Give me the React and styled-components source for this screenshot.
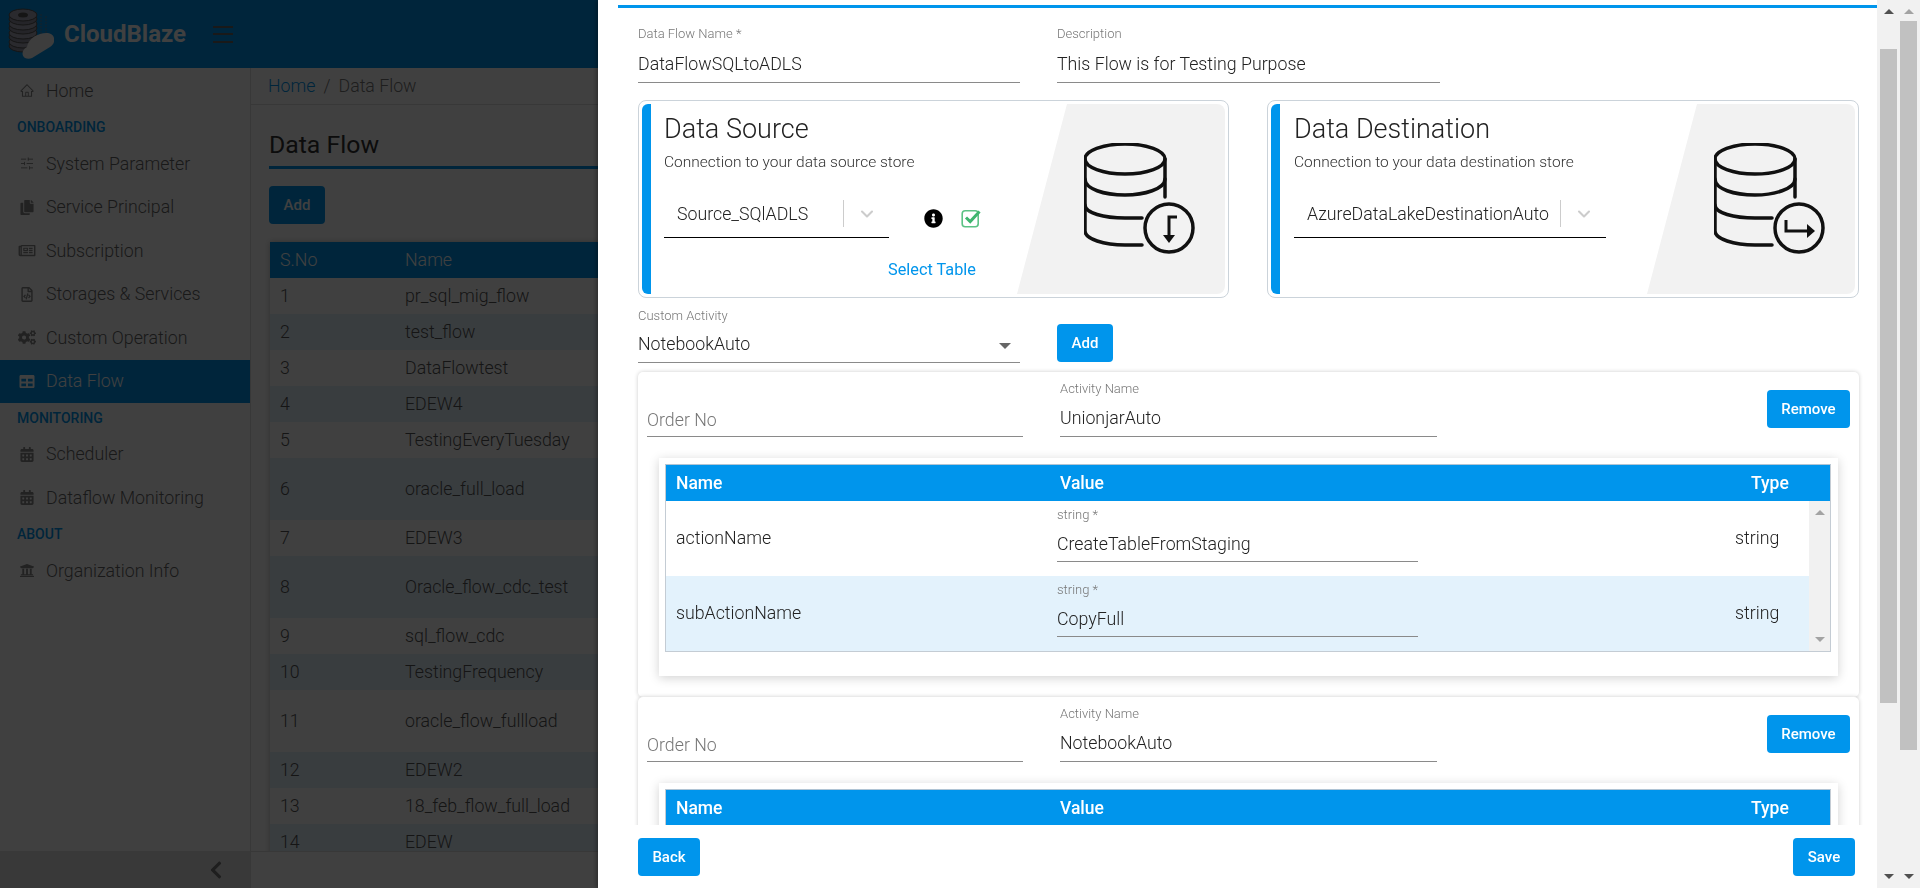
import React from 'react';
import styled, { createGlobalStyle } from 'styled-components';
import {
  FaCopy,
  FaRegNewspaper,
  FaRegFileCode,
  FaCogs,
  FaTable,
  FaCalendarAlt,
  FaUniversity,
  FaInfoCircle,
  FaChevronLeft,
} from 'react-icons/fa';
import { AiOutlineHome } from 'react-icons/ai';
import { ChevronDown, SlidersHorizontal } from 'lucide-react';

const PRIMARY = '#0095ec';

const GlobalStyle = createGlobalStyle`
  html, body {
    margin: 0;
    padding: 0;
    height: 100%;
    overflow: hidden;
    font-family: Roboto, "Liberation Sans", sans-serif;
    font-size: 17.75px;
    font-weight: 300;
    color: #333;
    background: #fff;
  }
  * {
    box-sizing: border-box;
  }
`;

/* page behind the drawer */
const Page = styled.div`
  display: flex;
  flex-direction: column;
  height: 100vh;
  overflow: hidden;
`;

const TopBar = styled.header`
  display: flex;
  align-items: center;
  flex: 0 0 68px;
  padding-left: 8px;
  background: ${PRIMARY};
`;

const Brand = styled.span`
  margin-left: 10px;
  width: 149px;
  color: #fff;
  font-size: 24px;
  font-weight: 700;
`;

const Burger = styled.div`
  display: flex;
  flex-direction: column;
  gap: 5.5px;
  width: 20px;

  span {
    height: 2px;
    background: #666;
  }
`;

const Below = styled.div`
  display: flex;
  flex: 1;
  min-height: 0;
`;

const Sidebar = styled.aside`
  display: flex;
  flex-direction: column;
  flex: 0 0 250px;
`;

const Nav = styled.nav`
  flex: 1;
  padding-top: 1px;
`;

const NavItem = styled.div`
  display: flex;
  align-items: center;
  height: 43.5px;
  padding-left: 18px;
  background: ${(p) => (p.$active ? PRIMARY : 'transparent')};
  color: ${(p) => (p.$active ? '#fff' : '#666')};

  svg {
    flex: 0 0 18px;
    margin-right: 10px;
    font-size: 15px;
    color: ${(p) => (p.$active ? '#fff' : '#888')};
  }
`;

const NavHeading = styled.div`
  display: flex;
  align-items: center;
  height: 29.5px;
  padding-left: 17px;
  color: ${PRIMARY};
  font-size: 14px;
  font-weight: 500;
`;

const SidebarFooter = styled.div`
  display: flex;
  align-items: center;
  justify-content: flex-end;
  flex: 0 0 37px;
  padding-right: 24px;
  background: #e4e4e4;
  color: #777;
  font-size: 20px;
`;

const Main = styled.main`
  display: flex;
  flex-direction: column;
  flex: 1;
  min-width: 0;
  border-left: 1px solid #ddd;
`;

const Breadcrumb = styled.div`
  display: flex;
  align-items: center;
  gap: 8px;
  flex: 0 0 37px;
  padding-left: 17px;
  border-bottom: 1px solid #ddd;
  color: #777;

  a {
    color: ${PRIMARY};
  }
`;

const MainContent = styled.div`
  flex: 1;
  min-height: 0;
  overflow: hidden;
  padding: 25px 0 0 18px;
`;

const PageTitle = styled.h1`
  margin: 0;
  padding-bottom: 6px;
  border-bottom: 3px solid ${PRIMARY};
  color: #333;
  font-size: 24.8px;
  font-weight: 400;
  line-height: 30px;
`;

const Button = styled.button`
  height: 38px;
  padding: 0;
  border: none;
  border-radius: 4px;
  background: ${PRIMARY};
  color: #fff;
  font-family: inherit;
  font-size: 15px;
  font-weight: 500;
`;

const PageAdd = styled(Button)`
  display: block;
  margin-top: 17px;
  width: 56px;
`;

const FlowTable = styled.div`
  margin: 18px 0 0 1px;
  box-shadow: 0 0 6px rgba(0, 0, 0, 0.25);
`;

const FlowRow = styled.div`
  display: flex;
  align-items: center;
  height: ${(p) => (p.$tall ? 62 : 36)}px;
  padding-left: 10px;
  background: ${(p) => (p.$head ? PRIMARY : p.$alt ? '#e3f2fc' : '#fff')};
  color: ${(p) => (p.$head ? '#fff' : '#555')};
`;

const FlowNo = styled.span`
  flex: 0 0 125px;
`;

const MainFooter = styled.div`
  flex: 0 0 37px;
  border-top: 1px solid #ddd;
  background: #fff;
`;

const Backdrop = styled.div`
  position: fixed;
  inset: 0;
  background: rgba(0, 0, 0, 0.75);
`;

/* right hand drawer */
const Drawer = styled.section`
  position: fixed;
  top: 0;
  right: 0;
  bottom: 0;
  left: 598px;
  display: flex;
  background: #fff;
  box-shadow: -2px 0 4px rgba(0, 0, 0, 0.3);
`;

const DrawerColumn = styled.div`
  display: flex;
  flex-direction: column;
  flex: 1;
  min-width: 0;
  margin-left: 20px;
  padding-top: 5px;
`;

const DrawerBody = styled.div`
  flex: 1;
  min-height: 0;
  overflow: hidden;
  padding: 18px 18px 0 20px;
  border-top: 3px solid ${PRIMARY};
`;

const DrawerFooter = styled.div`
  display: flex;
  justify-content: space-between;
  flex: 0 0 63px;
  padding: 13px 22px 0 20px;
`;

const FooterButton = styled(Button)`
  width: 62px;
`;

const FieldGrid = styled.div`
  display: grid;
  grid-template-columns: 382px 383px;
  column-gap: 37px;
  align-items: end;
`;

const Field = styled.div`
  display: flex;
  flex-direction: column;
  width: ${(p) => (p.$width ? `${p.$width}px` : 'auto')};
`;

const FieldLabel = styled.label`
  height: 16px;
  color: #777;
  font-size: 13px;
  line-height: 16px;
`;

const FieldValue = styled.div`
  display: flex;
  align-items: flex-end;
  justify-content: space-between;
  height: ${(p) => p.$height || 40}px;
  padding-bottom: ${(p) => p.$pb || 8}px;
  border-bottom: 1px solid #8a8a8a;
  color: ${(p) => (p.$placeholder ? '#777' : '#222')};
  line-height: 20px;
`;

const CardRow = styled.div`
  display: grid;
  grid-template-columns: 591px 592px;
  column-gap: 38px;
  margin-top: 17px;
`;

const Card = styled.div`
  display: flex;
  height: 198px;
  padding: 3px;
  border: 1px solid #cbd3da;
  border-radius: 8px;
`;

const CardStripe = styled.div`
  flex: 0 0 9px;
  border-radius: 6px 0 0 6px;
  background: ${PRIMARY};
`;

const CardBody = styled.div`
  flex: 1;
  min-width: 0;
  padding: 10px 0 0 ${(p) => p.$indent || 13}px;
`;

const CardTitle = styled.h2`
  margin: 0;
  color: #222;
  font-size: 27px;
  font-weight: 300;
  line-height: 30px;
`;

const CardText = styled.p`
  margin: 8px 0 0;
  color: #333;
  font-size: 15.5px;
  line-height: 20px;
`;

const PickRow = styled.div`
  display: flex;
  margin-top: 18px;
`;

const Picker = styled.div`
  display: flex;
  align-items: center;
  width: ${(p) => p.$width}px;
  height: 48px;
  border-bottom: 1px solid #000;
`;

const PickerText = styled.span`
  flex: 1;
  padding-left: 13px;
  color: #222;
  white-space: nowrap;
`;

const PickerSeparator = styled.span`
  width: 1px;
  height: 27px;
  background: #ccc;
`;

const PickerChevron = styled.span`
  display: flex;
  justify-content: center;
  flex: 0 0 45px;
  color: #ccc;
`;

const PickTools = styled.div`
  display: flex;
  align-items: center;
  gap: 18px;
  margin-left: 35px;
  padding-top: 8px;
  height: 48px;
`;

const InfoIcon = styled(FaInfoCircle)`
  color: #000;
  font-size: 19px;
`;

const SelectTable = styled.a`
  display: block;
  margin: 22px 0 0 224px;
  color: ${PRIMARY};
  font-weight: 400;
  font-size: 16.3px;
  line-height: 20px;
`;

const CardArt = styled.div`
  flex: 0 0 208px;
  height: 190px;
  padding: 39px 0 0 67px;
  border-radius: 0 8px 8px 0;
  background: #f2f2f2;
  clip-path: polygon(50px 0, 100% 0, 100% 100%, 0 100%);
`;

const CustomRow = styled(FieldGrid)`
  margin-top: 10px;
`;

const AddButton = styled(Button)`
  width: 56px;
  margin-bottom: 1px;
`;

const ActivityStack = styled.div`
  margin-top: 9px;
`;

const ActivityCard = styled.article`
  height: 325px;
  padding: 9px 9px 0;
  border-radius: 5px;
  box-shadow: 0 0 4px rgba(0, 0, 0, 0.2);
  background: #fff;
`;

const ActivityHead = styled.div`
  display: flex;
  align-items: flex-end;
  gap: 37px;
`;

const RemoveButton = styled(Button)`
  width: 83px;
  margin: 0 0 9px auto;
`;

const InnerCard = styled.div`
  margin: 21px 12px 0 12px;
  height: 218px;
  padding: 6px 7px 0 6px;
  background: #fff;
  box-shadow: 0 2px 10px rgba(0, 0, 0, 0.18);
`;

const ParamTable = styled.div`
  border: 1px solid #c4ccd4;
  border-top-color: #b0c4d4;
`;

const ParamHead = styled.div`
  display: grid;
  grid-template-columns: 384px 691px 1fr;
  align-items: center;
  height: 36px;
  padding-left: 10px;
  background: ${PRIMARY};
  color: #fff;
  font-size: 17.5px;
  font-weight: 500;
`;

const ParamBody = styled.div`
  display: flex;
`;

const ParamRows = styled.div`
  flex: 1;
  min-width: 0;
`;

const ParamRow = styled.div`
  display: grid;
  grid-template-columns: 381px 361px 1fr;
  align-items: center;
  height: 75px;
  padding: 0 0 2px 10px;
  background: ${(p) => (p.$alt ? '#e3f2fc' : '#fff')};
  color: #222;
`;

const ParamField = styled(Field)`
  align-self: start;
  padding-top: 6px;
`;

const ParamType = styled.span`
  padding-left: 317px;
`;

const MiniScroll = styled.div`
  display: flex;
  flex-direction: column;
  justify-content: space-between;
  flex: 0 0 21px;
  padding: 9px 0;
  background: #f1f1f1;
`;

const Arrow = styled.span`
  align-self: center;
  width: 0;
  height: 0;
  border-left: ${(p) => p.$size || 5}px solid transparent;
  border-right: ${(p) => p.$size || 5}px solid transparent;
  border-${(p) => (p.$up ? 'bottom' : 'top')}: ${(p) => p.$size || 5}px solid ${(p) => p.$color || '#a3a3a3'};
`;

const Caret = styled(Arrow)`
  margin: 0 9px 5px 0;
  align-self: flex-end;
`;

/* the two browser scrollbars stacked at the right edge */
const Scrollbars = styled.div`
  display: flex;
  flex: 0 0 43px;
  padding-left: 3px;
  background: #f1f1f1;
`;

const Scrollbar = styled.div`
  position: relative;
  display: flex;
  flex-direction: column;
  justify-content: space-between;
  width: 17px;
  margin-right: 3px;
  padding: 9px 0;
`;

const Thumb = styled.div`
  position: absolute;
  left: 0;
  right: 0;
  top: ${(p) => p.$top}px;
  height: ${(p) => p.$height}px;
  background: #c1c1c1;
`;

const FLOWS = [
  ['pr_sql_mig_flow'],
  ['test_flow'],
  ['DataFlowtest'],
  ['EDEW4'],
  ['TestingEveryTuesday'],
  ['oracle_full_load', true],
  ['EDEW3'],
  ['Oracle_flow_cdc_test', true],
  ['sql_flow_cdc'],
  ['TestingFrequency'],
  ['oracle_flow_fullload', true],
  ['EDEW2'],
  ['18_feb_flow_full_load'],
  ['EDEW'],
];

const CloudLogo = () => (
  <svg width="46" height="52" viewBox="0 0 46 52">
    <path d="M28 4v24M33 6v22M38 8v20" stroke="#5d7f99" strokeWidth="1" strokeDasharray="2 1" fill="none" />
    {[34, 25, 16, 7].map((y) => (
      <g key={y}>
        <ellipse cx="15" cy={y + 4} rx="14" ry="6" fill="#8e8e9e" stroke="#555" />
        <ellipse cx="15" cy={y} rx="14" ry="6" fill="#a6a6b6" stroke="#555" />
      </g>
    ))}
    <ellipse cx="15" cy="7" rx="5" ry="2.5" fill="#555" />
    <path d="M17 50c-4-2-3-9 2-11 1-6 6-11 13-13 7-2 13-1 14 4 1 4-1 7-4 9L24 50c-2 1-5 1-7 0z" fill="#f2f2f2" />
  </svg>
);

const TickBox = () => (
  <svg width="21" height="21" viewBox="0 0 21 21">
    <rect x="1.2" y="2.8" width="16" height="16" rx="3" fill="none" stroke="#5cc285" strokeWidth="1.6" />
    <path d="M5 9.5L9.2 13.5L18.5 3.5" fill="none" stroke="#3fb56f" strokeWidth="3" />
  </svg>
);

const Cylinder = () => (
  <g fill="none" stroke="#111" strokeWidth="3.5" strokeLinecap="round">
    <ellipse cx="41" cy="16" rx="40" ry="15" />
    <path d="M1 16V88C1 96 20 102 41 102H58" />
    <path d="M81 16V54" />
    <path d="M1 36C1 46 20 52 41 52C60 52 81 46 81 36" />
    <path d="M1 62C1 70 20 75 41 75H58" />
    <circle cx="85" cy="85" r="24" />
  </g>
);

const SourceArt = () => (
  <svg width="112" height="112" viewBox="0 0 112 112">
    <Cylinder />
    <path d="M93 74H85V97" fill="none" stroke="#111" strokeWidth="3" />
    <path d="M79 92L85 100L91 92Z" fill="#111" />
  </svg>
);

const DestinationArt = () => (
  <svg width="112" height="112" viewBox="0 0 112 112">
    <Cylinder />
    <path d="M72 77V88H97" fill="none" stroke="#111" strokeWidth="3" />
    <path d="M93 81L101 88L93 95Z" fill="#111" />
  </svg>
);

const ActivityBlock = ({ name, first }) => (
  <ActivityCard>
    <ActivityHead>
      <Field $width={376}>
        <FieldValue $placeholder $pb={6}>Order No</FieldValue>
      </Field>
      <Field $width={377}>
        <FieldLabel>Activity Name</FieldLabel>
        <FieldValue>{name}</FieldValue>
      </Field>
      <RemoveButton>Remove</RemoveButton>
    </ActivityHead>
    <InnerCard>
      <ParamTable>
        <ParamHead>
          <span>Name</span>
          <span>Value</span>
          <span>Type</span>
        </ParamHead>
        {first && (
          <ParamBody>
            <ParamRows>
              <ParamRow>
                <span>actionName</span>
                <ParamField>
                  <FieldLabel>string *</FieldLabel>
                  <FieldValue $height={39} $pb={7}>CreateTableFromStaging</FieldValue>
                </ParamField>
                <ParamType>string</ParamType>
              </ParamRow>
              <ParamRow $alt>
                <span>subActionName</span>
                <ParamField>
                  <FieldLabel>string *</FieldLabel>
                  <FieldValue $height={39} $pb={7}>CopyFull</FieldValue>
                </ParamField>
                <ParamType>string</ParamType>
              </ParamRow>
            </ParamRows>
            <MiniScroll>
              <Arrow $up />
              <Arrow />
            </MiniScroll>
          </ParamBody>
        )}
      </ParamTable>
    </InnerCard>
  </ActivityCard>
);

const App = () => (
  <>
    <GlobalStyle />
    <Page>
      <TopBar>
        <CloudLogo />
        <Brand>CloudBlaze</Brand>
        <Burger>
          <span />
          <span />
          <span />
        </Burger>
      </TopBar>
      <Below>
        <Sidebar>
          <Nav>
            <NavItem><AiOutlineHome />Home</NavItem>
            <NavHeading>ONBOARDING</NavHeading>
            <NavItem><SlidersHorizontal size={15} strokeWidth={1.5} />System Parameter</NavItem>
            <NavItem><FaCopy />Service Principal</NavItem>
            <NavItem><FaRegNewspaper />Subscription</NavItem>
            <NavItem><FaRegFileCode />Storages &amp; Services</NavItem>
            <NavItem><FaCogs />Custom Operation</NavItem>
            <NavItem $active><FaTable />Data Flow</NavItem>
            <NavHeading>MONITORING</NavHeading>
            <NavItem><FaCalendarAlt />Scheduler</NavItem>
            <NavItem><FaCalendarAlt />Dataflow Monitoring</NavItem>
            <NavHeading>ABOUT</NavHeading>
            <NavItem><FaUniversity />Organization Info</NavItem>
          </Nav>
          <SidebarFooter><FaChevronLeft /></SidebarFooter>
        </Sidebar>
        <Main>
          <Breadcrumb>
            <a>Home</a>
            <span>/</span>
            <span>Data Flow</span>
          </Breadcrumb>
          <MainContent>
            <PageTitle>Data Flow</PageTitle>
            <PageAdd>Add</PageAdd>
            <FlowTable>
              <FlowRow $head>
                <FlowNo>S.No</FlowNo>
                <span>Name</span>
              </FlowRow>
              {FLOWS.map(([name, tall], i) => (
                <FlowRow key={name} $tall={tall} $alt={i % 2 === 1}>
                  <FlowNo>{i + 1}</FlowNo>
                  <span>{name}</span>
                </FlowRow>
              ))}
            </FlowTable>
          </MainContent>
          <MainFooter />
        </Main>
      </Below>
    </Page>
    <Backdrop />
    <Drawer>
      <DrawerColumn>
        <DrawerBody>
          <FieldGrid>
            <Field>
              <FieldLabel>Data Flow Name *</FieldLabel>
              <FieldValue $height={41}>DataFlowSQLtoADLS</FieldValue>
            </Field>
            <Field>
              <FieldLabel>Description</FieldLabel>
              <FieldValue $height={41}>This Flow is for Testing Purpose</FieldValue>
            </Field>
          </FieldGrid>
          <CardRow>
            <Card>
              <CardStripe />
              <CardBody>
                <CardTitle>Data Source</CardTitle>
                <CardText>Connection to your data source store</CardText>
                <PickRow>
                  <Picker $width={225}>
                    <PickerText>Source_SQlADLS</PickerText>
                    <PickerSeparator />
                    <PickerChevron><ChevronDown size={20} strokeWidth={2.5} /></PickerChevron>
                  </Picker>
                  <PickTools>
                    <InfoIcon />
                    <TickBox />
                  </PickTools>
                </PickRow>
                <SelectTable>Select Table</SelectTable>
              </CardBody>
              <CardArt><SourceArt /></CardArt>
            </Card>
            <Card>
              <CardStripe />
              <CardBody $indent={14}>
                <CardTitle>Data Destination</CardTitle>
                <CardText>Connection to your data destination store</CardText>
                <PickRow>
                  <Picker $width={312}>
                    <PickerText>AzureDataLakeDestinationAuto</PickerText>
                    <PickerSeparator />
                    <PickerChevron><ChevronDown size={20} strokeWidth={2.5} /></PickerChevron>
                  </Picker>
                </PickRow>
              </CardBody>
              <CardArt><DestinationArt /></CardArt>
            </Card>
          </CardRow>
          <CustomRow>
            <Field>
              <FieldLabel>Custom Activity</FieldLabel>
              <FieldValue $height={39}>
                NotebookAuto
                <Caret $size={6} $color="#666" />
              </FieldValue>
            </Field>
            <AddButton>Add</AddButton>
          </CustomRow>
          <ActivityStack>
            <ActivityBlock name="UnionjarAuto" first />
            <ActivityBlock name="NotebookAuto" />
          </ActivityStack>
        </DrawerBody>
        <DrawerFooter>
          <FooterButton>Back</FooterButton>
          <FooterButton>Save</FooterButton>
        </DrawerFooter>
      </DrawerColumn>
      <Scrollbars>
        <Scrollbar>
          <Thumb $top={49} $height={654} />
          <Arrow $up $color="#505050" />
          <Arrow $color="#505050" />
        </Scrollbar>
        <Scrollbar>
          <Thumb $top={21} $height={729} />
          <Arrow $up />
          <Arrow $color="#505050" />
        </Scrollbar>
      </Scrollbars>
    </Drawer>
  </>
);

export default App;
